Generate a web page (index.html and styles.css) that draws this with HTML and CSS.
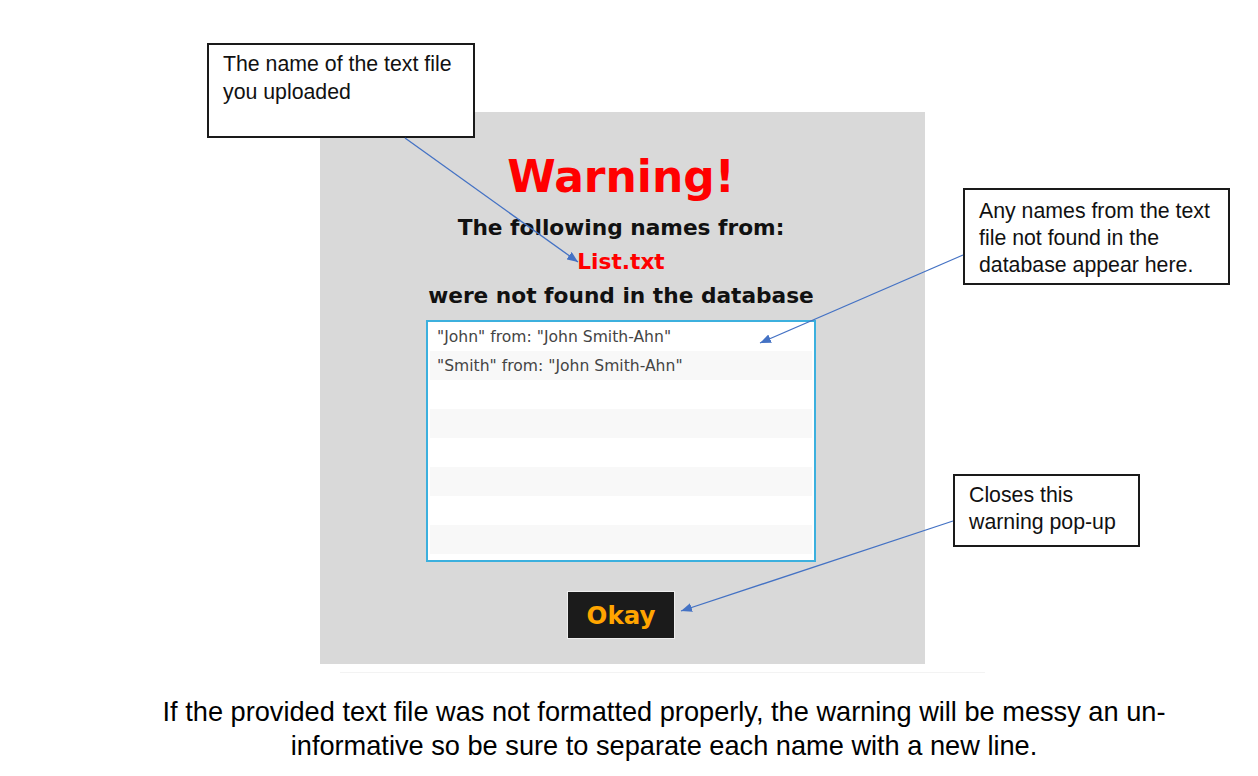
FILE: index.html
```html
<!DOCTYPE html>
<html>
<head>
<meta charset="utf-8">
<link rel="stylesheet" href="styles.css">
</head>
<body>
<div class="page">
  <div class="panel">
    <div class="title">Warning!</div>
    <div class="line">The following names from:</div>
    <div class="line file">List.txt</div>
    <div class="line">were not found in the database</div>
    <div class="list">
      <div class="row">"John" from: "John Smith-Ahn"</div>
      <div class="row">"Smith" from: "John Smith-Ahn"</div>
      <div class="row"></div>
      <div class="row"></div>
      <div class="row"></div>
      <div class="row"></div>
      <div class="row"></div>
      <div class="row"></div>
    </div>
    <button class="okay">Okay</button>
  </div>
  <div class="rule"></div>
  <p class="note">If the provided text file was not formatted properly, the warning will be messy an un-informative so be sure to separate each name with a new line.</p>

  <div class="callout c1">The name of the text file<br>you uploaded</div>
  <div class="callout c2">Any names from the text<br>file not found in the<br>database appear here.</div>
  <div class="callout c3">Closes this<br>warning pop-up</div>

  <svg class="arrows" width="1258" height="776" viewBox="0 0 1258 776">
    <defs>
      <marker id="ah" viewBox="0 0 10 10" refX="10" refY="5" markerWidth="11" markerHeight="9" markerUnits="userSpaceOnUse" orient="auto" preserveAspectRatio="none">
        <path d="M0 0 L10 5 L0 10 Z" fill="#4472c4"/>
      </marker>
    </defs>
    <line x1="405" y1="138" x2="578" y2="262" stroke="#4472c4" stroke-width="1.3" marker-end="url(#ah)"/>
    <line x1="963" y1="255" x2="760" y2="343" stroke="#4472c4" stroke-width="1.3" marker-end="url(#ah)"/>
    <line x1="953" y1="521" x2="681" y2="611" stroke="#4472c4" stroke-width="1.3" marker-end="url(#ah)"/>
  </svg>
</div>
</body>
</html>
```
FILE: styles.css
```css
html, body {
  margin: 0;
  padding: 0;
  background: #ffffff;
}

.page {
  position: relative;
  width: 1258px;
  height: 776px;
  overflow: hidden;
  padding-top: 112px;
  box-sizing: border-box;
}

.panel {
  margin-left: 320px;
  width: 605px;
  height: 552px;
  background: #d9d9d9;
  display: flex;
  flex-direction: column;
  align-items: center;
  padding-top: 39px;
  padding-right: 3px;
  box-sizing: border-box;
  font-family: "DejaVu Sans", sans-serif;
}

.title {
  font-size: 44px;
  line-height: 52px;
  font-weight: bold;
  color: #ff0000;
  margin-bottom: 8px;
}

.line {
  font-size: 21.7px;
  line-height: 34px;
  font-weight: bold;
  color: #111111;
}

.file {
  color: #ff0000;
}

.list {
  margin-top: 7px;
  width: 390px;
  height: 242px;
  box-sizing: border-box;
  border: 2px solid #3cb0de;
  background: #ffffff;
  padding: 0 2px 6px 2px;
}

.row {
  height: 29px;
  line-height: 30px;
  padding-left: 7px;
  font-size: 15.6px;
  color: #444444;
  white-space: nowrap;
}

.row:nth-child(even) {
  background: #f8f8f8;
}

.okay {
  margin-top: 29px;
  width: 108px;
  height: 48px;
  background: #1b1b1b;
  border: 1px solid #eeeeee;
  color: #ffa500;
  font-family: "DejaVu Sans", sans-serif;
  font-weight: bold;
  font-size: 24.5px;
  padding: 0;
}

.rule {
  margin-left: 340px;
  width: 645px;
  height: 1px;
  margin-top: 8px;
  background: #f3f3f3;
}

.note {
  margin: 22px 0 0 156px;
  width: 1016px;
  text-align: center;
  font-family: "Liberation Sans", Arial, sans-serif;
  font-size: 27.2px;
  line-height: 34px;
  color: #000000;
}

.callout {
  position: absolute;
  box-sizing: border-box;
  border: 2px solid #1a1a1a;
  background: #ffffff;
  font-family: "Liberation Sans", Arial, sans-serif;
  font-size: 21.3px;
  line-height: 27px;
  color: #111111;
  padding-left: 14px;
}

.c1 {
  left: 207px;
  top: 43px;
  width: 268px;
  height: 95px;
  line-height: 28px;
  padding-top: 5px;
}

.c2 {
  left: 963px;
  top: 188px;
  width: 267px;
  height: 97px;
  padding-top: 8px;
}

.c3 {
  left: 953px;
  top: 474px;
  width: 187px;
  height: 73px;
  padding-top: 6px;
}

.arrows {
  position: absolute;
  left: 0;
  top: 0;
  pointer-events: none;
}
```
